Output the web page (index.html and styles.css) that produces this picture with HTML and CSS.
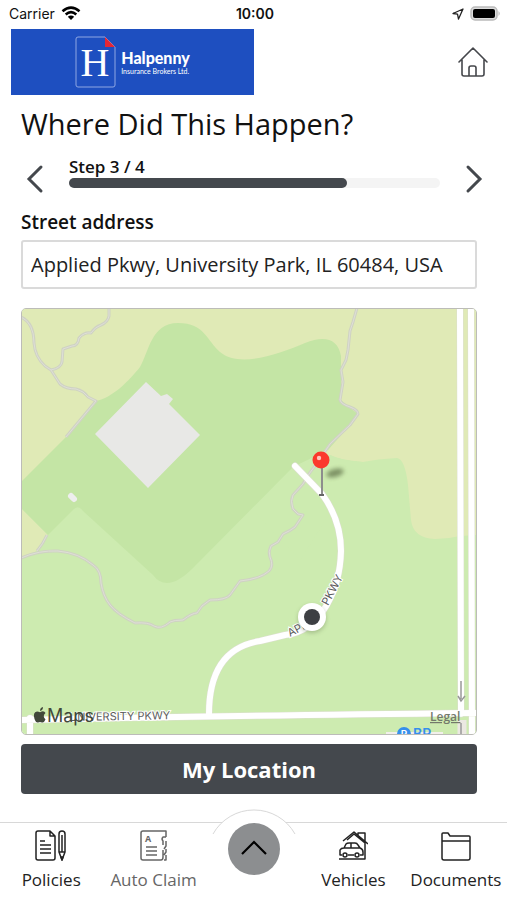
FILE: index.html
```html
<!DOCTYPE html>
<html lang="en">
<head>
    <meta charset="UTF-8">
    <meta name="viewport" content="width=device-width, initial-scale=1.0">
    <title>Where Did This Happen?</title>
    <link rel="stylesheet" href="styles.css">
</head>
<body>
    <div class="statusbar">
        <div class="carrier">
            Carrier
            <svg width="20" height="15" viewBox="0 0 20 15" fill="none" stroke="#000" stroke-width="2.6">
                <path d="M1.5 5.2Q10-2 18.500 5.200M4.700 8.400Q10 4 15.300 8.400"/>
                <path d="M10 14L6.800 10.800Q10 8.200 13.200 10.800Z" fill="#000" stroke="none"/>
            </svg>
        </div>
        <div class="clock">10:00</div>
        <div class="battery">
            <svg width="12" height="12" viewBox="0 0 12 12" fill="none" stroke="#222" stroke-width="1.3" stroke-linejoin="round">
                <path d="M11 1L1 5.500L5.500 6.200L6.500 11Z"/>
            </svg>
            <svg width="31" height="15" viewBox="0 0 31 15">
                <rect x="1" y="1" width="26" height="13" rx="4" fill="#ddd" stroke="#bbb" stroke-width="1.500"/>
                <rect x="3" y="3" width="22" height="9" rx="2" fill="#000"/>
                <path d="M28.500 5Q31 7.500 28.500 10Z" fill="#bbb"/>
            </svg>
        </div>
    </div>

    <header class="header">
        <div class="logo">
            <svg width="41" height="52" viewBox="0 0 41 52">
                <path d="M30 1H3Q1 1 1 3V49Q1 51 3 51H38Q40 51 40 49V11Z" fill="none" stroke="#8ea7e3"/>
                <path d="M30 1V11H40Z" fill="#e32636"/>
                <text class="logo-h" x="20" y="40" text-anchor="middle">H</text>
            </svg>
            <div class="logo-text">
                <div class="logo-name">Halpenny</div>
                <div class="logo-sub">Insurance Brokers Ltd.</div>
            </div>
        </div>
        <a class="home" href="#" aria-label="Home">
            <svg width="30" height="30" viewBox="0 0 30 30" fill="none" stroke="#45474b" stroke-width="1.600" stroke-linejoin="round" stroke-linecap="round">
                <path d="M1 15L15 1L29 15M4 13V27Q4 29 6 29H24Q26 29 26 27V13M11 29V21Q11 19 13 19H16Q18 19 18 21V29"/>
            </svg>
        </a>
    </header>

    <main class="content">
        <h1>Where Did This Happen?</h1>

        <div class="steps">
            <button class="arrow" type="button" aria-label="Previous step">
                <svg width="18" height="30" viewBox="0 0 18 30"><path d="M15 3L3 15L15 27"/></svg>
            </button>
            <div class="step">
                <label for="step">Step 3 / 4</label>
                <progress id="step" value="3" max="4"></progress>
            </div>
            <button class="arrow" type="button" aria-label="Next step">
                <svg width="18" height="30" viewBox="0 0 18 30"><path d="M3 3L15 15L3 27"/></svg>
            </button>
        </div>

        <label class="address-label" for="address">Street address</label>
        <input class="address" type="text" id="address" value="Applied Pkwy, University Park, IL 60484, USA">

        <div class="map">
            <svg class="map-svg" viewBox="22 309 454 425">
                <defs>
                    <filter id="blur" x="-50%" y="-50%" width="200%" height="200%"><feGaussianBlur stdDeviation="2"/></filter>
                </defs>
                <!-- ground -->
                <rect x="21" y="308" width="456" height="427" fill="#cdebb0"/>
                <path d="M21 308H477V535L460 536Q448 539 435 539Q413 538 411 520L408 485Q405 459 397 458Q377 459 363 462Q340 460 330 455L300 460L21 500Z" fill="#e0eab6"/>
                <path d="M21 508L48 535L37 551L21 557Z" fill="#e0eab6"/>
                <path d="M330 455Q342 461 363 462L300 560L253 510L293 467Z" fill="#cdebb0"/>
                <path d="M21 482L66 437L96 401C112 398 129 381 140 367C149 352 151 323 178 323C205 323 207 341 220 352C239 368 277 355 305 343C325 335 338 339 341 356L341 400L350 408L358 414L350 425L328 450L293 467L193 568Q167 594 153 575L83 511Q78 504 73 510L48 535L21 508Z" fill="#c4e5a5"/>
                <!-- buildings -->
                <path d="M146 382L161 396L167 394L173 399L169 404L200 435L148 488L95 434Z" fill="#e8e8e6"/>
                <path d="M71 496L74 499" stroke="#eee" stroke-width="6" stroke-linecap="round"/>
                <!-- trails -->
                <g class="trail">
                    <path id="trails" d="M21 317Q34 323 34 343Q35 357 45 366L51 370L60 384Q66 389 76 389Q84 391 88 397L96 401L66 437M109 308V316Q108 322 101 325Q95 327 91 333Q84 332 79 338Q78 346 72 346L63 349L62 362Q61 368 51 370M357 308L353 322L350 331L348 350L346 360L341 370L343 382L340 400Q341 404 350 407Q358 410 358 414L350 425L330 444L315 466Q309 473 303 484L293 495Q290 501 293 509L298 514L303 515L295 527Q290 531 283 534L278 542L271 546Q268 552 270 557Q274 566 269 571Q260 579 240 581L230 595Q226 600 210 600L202 606L197 613Q192 613 183 620Q174 620 170 622Q161 630 154 626Q148 622 135 623Q117 614 110 605Q103 596 101 583Q101 570 93 565Q79 553 58 551Q39 550 21 558M47 535Q43 544 37 551"/>
                </g>
                <g class="trail-inner"><use href="#trails"/></g>
                <!-- roads -->
                <g class="road-edge">
                    <path d="M295 466L322 494Q341 520 341 551C340 590 321 631 285 635L260 641Q209 649 209 714"/>
                    <path d="M21 720Q200 716 477 713M30 718V736M460 308L461 714M471 308L472 736"/>
                </g>
                <g class="road">
                    <path d="M295 466L322 494Q341 520 341 551C340 590 321 631 285 635L260 641Q209 649 209 714"/>
                    <path d="M21 720Q200 716 477 713M30 718V736M460 308L461 714M471 308L472 736"/>
                </g>
                <path d="M462 720V736" stroke="#ebe8e2" stroke-width="9"/>
                <path d="M461 681V699M458 696L461 701L465 696M461 723V736" fill="none" stroke="#999" stroke-width="1.500"/>
                <!-- map labels -->
                <text class="road-name" transform="rotate(-28 290 637)" x="290" y="637">API</text>
                <text class="road-name" transform="rotate(-62 328 606)" x="328" y="606">PKWY</text>
                <text class="road-name" transform="rotate(-1 69 721)" x="69" y="721">UNIVERSITY PKWY</text>
                <path d="M386 732H443V736H386Z" fill="#f2efeb"/>
                <circle cx="404" cy="734" r="7" fill="#368fec"/>
                <text class="place-icon" x="404" y="738" text-anchor="middle">P</text>
                <text class="place" x="413" y="739">BP</text>
                <path d="M40 711Q40 707.500 43 707Q43 710.500 40 711ZM45.500 719.500Q44 723 42 722.500Q40 721.500 38 722.500Q36 723 34.500 719Q32.500 712 37 711.500Q38.500 711.500 40 712.200Q44 710 45.500 713Q42 716 45.500 719.500Z" fill="#41483a"/>
                <text class="maps" x="47" y="722">Maps</text>
                <text class="legal" x="430" y="721">Legal</text>
                <!-- current location -->
                <circle cx="312" cy="619" r="14" fill="#5a6b45" opacity=".35" filter="url(#blur)"/>
                <circle cx="312" cy="617" r="14" fill="#fff"/>
                <circle cx="312" cy="617" r="8" fill="#3d3f43"/>
                <!-- pin -->
                <ellipse cx="335" cy="473" rx="9" ry="4" transform="rotate(-15 335 473)" fill="#52643d" opacity=".65" filter="url(#blur)"/>
                <path d="M322 468V494" stroke="#8d8d8d" stroke-width="2"/>
                <path d="M319 495H324" stroke="#666" stroke-width="2"/>
                <circle cx="321" cy="460" r="8.500" fill="#fb382d"/>
                <circle cx="319" cy="458" r="2.200" fill="#ffc4bc"/>
            </svg>
        </div>

        <button class="location" type="button">My Location</button>
    </main>

    <nav class="tabbar">
        <a class="tab" href="#">
            <svg width="32" height="32" viewBox="0 0 32 32" class="icon">
                <path d="M15 1H3Q1 1 1 3V28Q1 30 3 30H18Q20 30 20 28V6ZM15 1V6H20M5 11H10M5 15H16M5 19H16M5 23H16"/>
                <path d="M24 22V4Q24 1 27 1Q30 1 30 4V22L27 30ZM24 22H30M27 5V22"/><path d="M26 27L27 30L28 27Z"/>
            </svg>
            Policies
        </a>
        <a class="tab muted" href="#">
            <svg width="28" height="32" viewBox="0 0 28 32" class="icon">
                <path d="M26 7V1H3Q1 1 1 3V28Q1 30 3 30H21Q23 30 23 27V20M26 7H23Q21 9 23 11V15M26 11V16L24 19M26 19V22L24 25M26 25V30H24M6 17H17M6 21H17M6 25H17"/>
                <text class="icon-letter" x="5" y="12">A</text>
            </svg>
            Auto Claim
        </a>
        <div class="tab middle">
            <svg class="bump" width="84" height="27" viewBox="0 0 84 27">
                <path d="M1 26A47 47 0 0 1 83 26" fill="#fff" stroke="#d8d8d8"/>
            </svg>
            <button class="more" type="button" aria-label="More">
                <svg width="28" height="18" viewBox="0 0 28 18" fill="none" stroke="#000" stroke-width="2.200"><path d="M2 14L14 2L26 14"/></svg>
            </button>
        </div>
        <a class="tab" href="#">
            <svg width="30" height="32" viewBox="0 0 30 32" class="icon">
                <path d="M5 11L16 2L30 14M20 5V3H27V11M27 12V29H1M9 10L16 4L27 13"/>
                <path d="M4 25H2V20Q3 18 6 18L8 14Q9 13 11 13H17Q19 13 20 15L22 18Q25 19 25 22V25H22M10 25H16M6 18H22M13 13V18"/>
                <circle cx="7" cy="25" r="2"/><circle cx="19" cy="25" r="2"/>
            </svg>
            Vehicles
        </a>
        <a class="tab" href="#">
            <svg width="30" height="32" viewBox="0 0 30 32" class="icon">
                <path d="M1 8V4Q1 3 2 3H7L9 6H28Q29 6 29 7V28Q29 30 27 30H3Q1 30 1 28ZM1 11H29"/>
            </svg>
            Documents
        </a>
    </nav>
</body>
</html>
```
FILE: styles.css
```css
* {
    box-sizing: border-box;
}
body {
    margin: 0;
    min-height: 100vh;
    display: flex;
    flex-direction: column;
    font-family: "Open Sans", "Noto Sans", sans-serif;
    background-color: #fff;
    color: #111;
}
button {
    border: none;
    padding: 0;
    font-family: inherit;
    cursor: pointer;
}
svg {
    display: block;
}

/* Status bar */
.statusbar {
    display: grid;
    grid-template-columns: 1fr auto 1fr;
    align-items: center;
    height: 29px;
    padding: 0 6px 2px 9px;
    font-family: Inter, sans-serif;
    font-size: 14px;
}
.carrier, .battery {
    display: flex;
    align-items: center;
    gap: 6px;
}
.battery {
    justify-content: flex-end;
}
.clock {
    font-weight: 600;
}

/* Header */
.header {
    display: flex;
    justify-content: space-between;
    align-items: center;
    padding: 0 19px 0 11px;
}
.logo {
    display: flex;
    align-items: center;
    justify-content: center;
    gap: 5px;
    width: 243px;
    height: 66px;
    background-color: #1e4fc0;
    color: #fff;
    font-family: Lato, sans-serif;
}
.logo-h {
    font-family: "Liberation Serif", serif;
    font-size: 40px;
    fill: #fff;
}
.logo-name {
    font-size: 16px;
    line-height: 18px;
    font-weight: 900;
}
.logo-sub {
    font-size: 7px;
    line-height: 8px;
}

/* Form */
.content {
    display: flex;
    flex-direction: column;
    padding: 0 30px 0 21px;
}
h1 {
    margin: 7px 0 0;
    font-size: 29px;
    line-height: 44px;
    font-weight: 400;
}
.steps {
    display: flex;
    align-items: flex-end;
    margin: 11px -6px 0 5px;
    gap: 25px;
}
.arrow {
    background: none;
}
.arrow path {
    fill: none;
    stroke: #44484d;
    stroke-width: 3;
    stroke-linecap: round;
}
.step {
    flex: 1;
    display: flex;
    flex-direction: column;
    padding-bottom: 6px;
    font-size: 17px;
    line-height: 20px;
    font-weight: 600;
}
progress {
    appearance: none;
    display: block;
    width: 100%;
    height: 10px;
    border: none;
    margin-top: 1px;
}
progress::-webkit-progress-bar {
    background-color: #f4f4f4;
    border-radius: 5px;
}
progress::-webkit-progress-value {
    background-color: #44484d;
    border-radius: 5px;
}
.address-label {
    margin-top: 14px;
    font-size: 19px;
    line-height: 28px;
    font-weight: 600;
}
.address {
    width: 100%;
    height: 49px;
    margin-top: 4px;
    padding: 0 8px;
    border: 2px solid #dadada;
    border-radius: 3px;
    font-family: inherit;
    font-size: 20px;
    color: #222;
}
.map {
    margin-top: 19px;
    border-radius: 5px;
    overflow: hidden;
    border: 1px solid #bcbcb8;
}
.map-svg {
    width: 100%;
    height: auto;
}
.trail, .trail-inner, .road, .road-edge {
    fill: none;
    stroke-linejoin: round;
}
.trail {
    stroke: #cfd2c3;
    stroke-width: 3;
}
.trail-inner {
    stroke: #dedfd6;
    stroke-width: 1;
}
.road-edge {
    stroke: #dcdfcf;
    stroke-width: 7;
    stroke-linecap: round;
}
.road {
    stroke: #fff;
    stroke-width: 6;
    stroke-linecap: round;
}
.road-name {
    font-family: Inter, sans-serif;
    font-size: 11px;
    fill: #5c5c5c;
    stroke: #fff;
    stroke-width: 2px;
    paint-order: stroke;
}
.place, .place-icon {
    font-family: Inter, sans-serif;
    font-weight: 600;
}
.place {
    font-size: 14px;
    fill: #368fec;
}
.place-icon {
    font-size: 10px;
    fill: #fff;
}
.maps {
    font-family: Inter, sans-serif;
    font-size: 18px;
    fill: #41483a;
}
.legal {
    font-size: 12px;
    font-weight: 600;
    fill: #73796b;
    text-decoration: underline;
}
.location {
    height: 50px;
    margin-top: 9px;
    border-radius: 4px;
    background-color: #44484d;
    color: #fff;
    font-size: 22px;
    font-weight: 700;
}

/* Bottom tabs */
.tabbar {
    display: grid;
    grid-template-columns: 21fr 21fr 20fr 21fr 21fr;
    height: 78px;
    margin-top: auto;
    border-top: 1px solid #d8d8d8;
}
.tab {
    display: flex;
    flex-direction: column;
    align-items: center;
    gap: 6px;
    padding-top: 7px;
    font-size: 17px;
    line-height: 24px;
    color: #222;
    text-decoration: none;
    white-space: nowrap;
}
.muted {
    color: #666;
}
.icon {
    fill: none;
    stroke: currentColor;
    stroke-width: 1.5px;
    stroke-linejoin: round;
}
.icon-letter {
    font-size: 9px;
    font-weight: 700;
    fill: currentColor;
    stroke: none;
}
.middle {
    position: relative;
    padding-top: 0;
}
/* arch that rises over the top border */
.bump {
    position: absolute;
    top: -15px;
}
.more {
    position: relative;
    display: flex;
    align-items: center;
    justify-content: center;
    width: 52px;
    height: 52px;
    border-radius: 50%;
    background-color: #8c8e90;
}
```
